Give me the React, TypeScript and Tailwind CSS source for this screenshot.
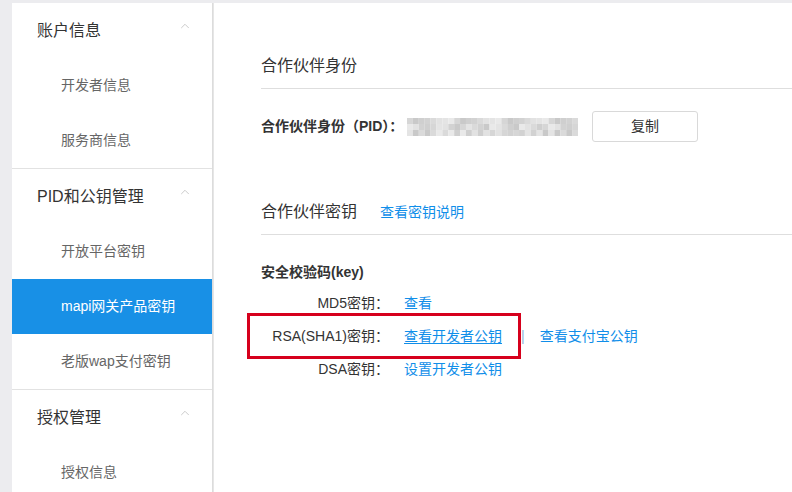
import { ChevronUp } from 'lucide-react';

const font = { fontFamily: '"Liberation Sans", "Noto Sans CJK SC", sans-serif' };

const groups = [
    { title: '账户信息', items: ['开发者信息', '服务商信息'] },
    { title: 'PID和公钥管理', items: ['开放平台密钥', 'mapi网关产品密钥', '老版wap支付密钥'] },
    { title: '授权管理', items: ['授权信息'] },
];

const ACTIVE = 'mapi网关产品密钥';

// 打码的 PID：三行灰色马赛克
const shades = ['#d6d6d6', '#e2e2e2', '#cfcfcf', '#e9e9e9', '#dadada', '#c9c9c9', '#e4e4e4', '#d2d2d2'];

function Mosaic() {
    const cells = [];
    for (let r = 0; r < 3; r++) {
        for (let c = 0; c < 29; c++) {
            const shade = shades[(c * 5 + r * 3 + (c % 3) * r) % shades.length];
            cells.push(<rect key={r + '-' + c} x={c * 6} y={r * 6} width={6} height={6} fill={shade} />);
        }
    }
    return (
        <svg width="171" height="18" viewBox="0 0 174 18" preserveAspectRatio="none" className="block">
            {cells}
        </svg>
    );
}

function Sidebar() {
    return (
        <aside className="w-[201px] shrink-0 bg-white border-r border-[#dcdcdc]">
            {groups.map((g, gi) => (
                <div key={gi} className={gi < groups.length - 1 ? 'border-b border-[#e2e2e2]' : ''}>
                    <div className="h-[55px] flex items-center justify-between pl-[25px] pr-[20px]">
                        <span className="text-[16px] text-[#333]">{g.title}</span>
                        <ChevronUp className="w-[14px] h-[14px] text-[#c4c4c4] -mt-[10px]" strokeWidth={1.5} />
                    </div>
                    {g.items.map((item) => (
                        <div
                            key={item}
                            className={
                                'h-[55px] flex items-center pl-[49px] text-[14px] ' +
                                (item === ACTIVE ? 'bg-[#1890e6] text-white' : 'text-[#666]')
                            }
                        >
                            {item}
                        </div>
                    ))}
                </div>
            ))}
        </aside>
    );
}

export default function App() {
    return (
        <div className="w-[792px] h-[492px] overflow-hidden bg-[#ececef] pt-[3px] flex flex-col" style={font}>
            <div className="flex flex-1 pl-[12px] min-h-0">
                <Sidebar />

                <main className="relative flex-1 bg-white border-l border-[#e6e6e6] pl-[47px] pt-[48px]">
                    {/* 合作伙伴身份 */}
                    <div className="h-[38px] leading-[30px] border-b border-[#dedede] text-[16px] text-[#333]">
                        合作伙伴身份
                    </div>
                    <div className="mt-[22px] h-[31px] flex items-center">
                        <span className="text-[14px] font-bold text-[#333] w-[146px]">合作伙伴身份（PID）：</span>
                        <Mosaic />
                        <button
                            type="button"
                            className="ml-[14px] w-[106px] h-[31px] border border-[#d9d9d9] rounded-[3px] bg-white text-[14px] text-[#333]"
                        >
                            复制
                        </button>
                    </div>

                    {/* 合作伙伴密钥 */}
                    <div className="mt-[55px] h-[38px] leading-[30px] border-b border-[#dedede] flex items-start">
                        <span className="text-[16px] text-[#333]">合作伙伴密钥</span>
                        <a className="ml-[23px] text-[14px] text-[#108ee9]">查看密钥说明</a>
                    </div>

                    <div className="mt-[27px] leading-[20px] text-[14px] font-bold text-[#333]">安全校验码(key)</div>

                    <div className="mt-[5px] text-[14px]">
                        <div className="h-[33px] flex items-center">
                            <span className="w-[128px] text-right text-[#333]">MD5密钥：</span>
                            <a className="ml-[15px] text-[#108ee9]">查看</a>
                        </div>
                        <div className="h-[33px] flex items-center">
                            <span className="w-[128px] text-right text-[#333]">RSA(SHA1)密钥：</span>
                            <a className="ml-[15px] text-[#108ee9] underline underline-offset-2">查看开发者公钥</a>
                            <span className="ml-[19px] text-[#8fb4d8]">|</span>
                            <a className="ml-[15px] text-[#108ee9]">查看支付宝公钥</a>
                        </div>
                        <div className="h-[33px] flex items-center">
                            <span className="w-[128px] text-right text-[#333]">DSA密钥：</span>
                            <a className="ml-[15px] text-[#108ee9]">设置开发者公钥</a>
                        </div>
                    </div>

                    {/* 标注框 */}
                    <div className="absolute left-[33px] top-[310px] w-[274px] h-[46px] border-[3px] border-[#d6001c]" />
                </main>
            </div>
        </div>
    );
}
